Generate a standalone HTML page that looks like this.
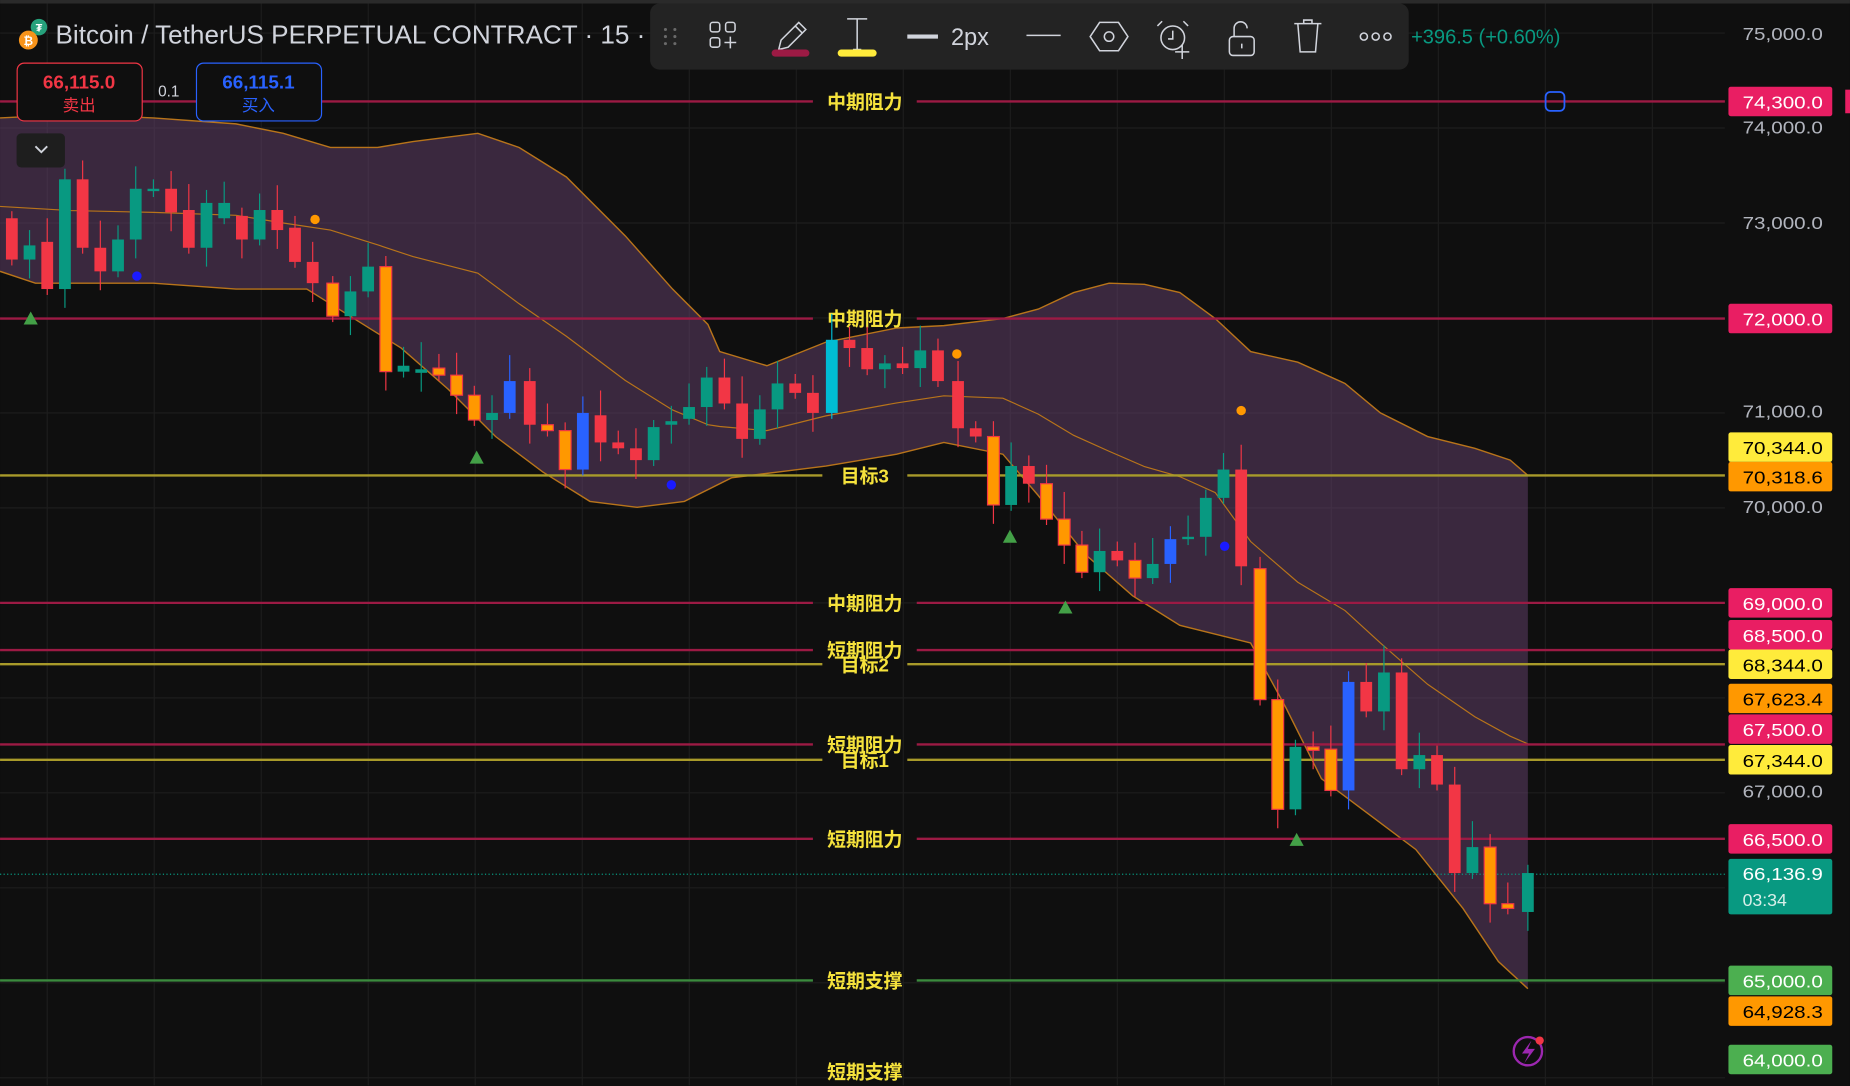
<!DOCTYPE html>
<html><head><meta charset="utf-8"><style>
html,body{margin:0;padding:0;background:#0f0f0f;overflow:hidden}
svg{display:block}
text{font-family:"Liberation Sans","Noto Sans CJK SC",sans-serif}
</style></head><body>
<svg id="c" width="1850" height="1086" viewBox="0 0 1568 920.5" xmlns="http://www.w3.org/2000/svg">
<rect width="1568" height="920.5" fill="#0f0f0f"/>
<rect width="1568" height="3" fill="#2a2a2a"/>
<g id="grid" stroke="#1d1d1d" stroke-width="1"></g>
<g id="band"></g>
<g id="lines"></g>
<g id="candles"></g>
<g id="marks"></g>
<!-- title -->
<circle cx="33" cy="23" r="7" fill="#26a17b"/>
<text x="33" y="26.5" font-size="9" fill="#fff" text-anchor="middle" font-weight="bold">₮</text>
<circle cx="24" cy="34" r="8" fill="#f7931a"/>
<text x="24" y="38" font-size="10" fill="#fff" text-anchor="middle" font-weight="bold">₿</text>
<text x="47" y="37" font-size="22" fill="#d1d4dc" textLength="500" lengthAdjust="spacingAndGlyphs">Bitcoin / TetherUS PERPETUAL CONTRACT · 15 ·</text>
<!-- sell/buy -->
<rect x="14.5" y="53.5" width="106" height="49" rx="6" fill="#0f0f0f" stroke="#f23645"/>
<text x="67" y="75" font-size="16" fill="#f23645" text-anchor="middle" font-weight="bold">66,115.0</text>
<text x="67" y="94" font-size="14" fill="#f23645" text-anchor="middle">卖出</text>
<text x="143" y="82" font-size="13" fill="#d1d4dc" text-anchor="middle">0.1</text>
<rect x="166.5" y="53.5" width="106" height="49" rx="6" fill="#0f0f0f" stroke="#2962ff"/>
<text x="219" y="75" font-size="16" fill="#2962ff" text-anchor="middle" font-weight="bold">66,115.1</text>
<text x="219" y="94" font-size="14" fill="#2962ff" text-anchor="middle">买入</text>
<rect x="14" y="113" width="41" height="29" rx="4" fill="#1e1e1e"/>
<path d="M30 124l5 5 5-5" stroke="#d1d4dc" stroke-width="1.6" fill="none"/>
<!-- toolbar -->
<rect x="551" y="3" width="643" height="56" rx="8" fill="#232323"/>
<g fill="#6a6a6a"><circle cx="564" cy="25" r="1.3"/><circle cx="572" cy="25" r="1.3"/><circle cx="564" cy="31" r="1.3"/><circle cx="572" cy="31" r="1.3"/><circle cx="564" cy="37" r="1.3"/><circle cx="572" cy="37" r="1.3"/></g>
<g stroke="#d1d4dc" stroke-width="1.3" fill="none">
<rect x="602" y="19" width="8" height="8" rx="2"/><rect x="615" y="19" width="8" height="8" rx="2"/><rect x="602" y="32" width="8" height="8" rx="2"/><path d="M619 31v10M614 36h10"/>
<path d="M660 42l2-8 15-15 6 6-15 15z M674 22l6 6"/>
<path d="M718 16h17M726.5 16v26M723 42h7"/>
<path d="M870 30h29"/>
<path d="M932 19h16l8 12-8 12h-16l-8-12z"/><circle cx="940" cy="31" r="4"/>
<circle cx="994" cy="32" r="10"/><path d="M994 26v7h-4M985 18l-4 4M1003 18l4 4M1002 38v12M996 44h12"/>
<rect x="1042" y="31" width="21" height="16" rx="3"/><path d="M1046 31v-7a5.5 5.5 0 0 1 11 0"/><path d="M1052.5 37v4"/>
<path d="M1097 20h23M1105 20v-3h7v3M1100 20l2 24h13l2-24"/>
<circle cx="1156" cy="31" r="3"/><circle cx="1166" cy="31" r="3"/><circle cx="1176" cy="31" r="3"/>
</g>
<rect x="654" y="42" width="32" height="6" rx="3" fill="#9c1a44"/>
<rect x="710" y="42" width="33" height="6" rx="3" fill="#ffeb3b"/>
<path d="M769 31h26" stroke="#d1d4dc" stroke-width="3.5"/>
<text x="806" y="38" font-size="20" fill="#d1d4dc">2px</text>
<text x="1196" y="37" font-size="17" fill="#089981">+396.5 (+0.60%)</text>
<!-- handle -->
<rect x="1310" y="78" width="16" height="16" rx="4" fill="none" stroke="#2962ff" stroke-width="1.5"/>
<!-- axis -->
<g id="axis" font-size="15" fill="#b2b5be"></g>
<g id="labels" font-size="15"></g>
<circle cx="1295" cy="891" r="12" fill="none" stroke="#9c27b0" stroke-width="2"/>
<path d="M1298 882l-8 11h6l-4 8 9-12h-6z" fill="#9c27b0"/>
<circle cx="1305" cy="882" r="3.5" fill="#f23645"/>
</svg>
<script>
const NS="http://www.w3.org/2000/svg";
function el(p,t,a,txt){const e=document.createElementNS(NS,t);for(const k in a)e.setAttribute(k,a[k]);if(txt!=null)e.textContent=txt;document.getElementById(p).appendChild(e);return e;}
const Y=p=>430.5+(70000-p)*0.0805;
for(let x=40;x<1462;x+=90.7)el('grid','line',{x1:x,y1:3,x2:x,y2:920});
[75000,74000,73000,72000,71000,70000,69000,68000,67000,66000,65000,64000].forEach(p=>el('grid','line',{x1:0,y1:Y(p),x2:1462,y2:Y(p)}));
const up=[[0,100],[60,97],[130,100],[200,105],[240,113],[280,125],[320,125],[350,120],[405,113],[440,125],[480,150],[530,200],[570,245],[600,275],[610,298],[650,310],[700,290],[760,278],[800,276],[850,270],[880,262],[910,248],[940,240],[970,241],[1000,248],[1030,270],[1060,298],[1100,307],[1140,325],[1170,350],[1210,370],[1250,380],[1280,390],[1295,403]];
const lo=[[0,230],[30,240],[60,240],[130,240],[200,245],[260,245],[300,270],[340,295],[380,330],[420,370],[460,400],[500,425],[540,430],[580,425],[620,405],[660,400],[700,395],[760,385],[800,375],[850,385],[880,420],[920,470],[960,505],[1000,530],[1040,540],[1060,545],[1090,600],[1120,660],[1160,690],[1200,720],[1240,770],[1270,815],[1295,838]];
const ps=a=>a.map(p=>p.join(',')).join(' ');
el('band','polygon',{points:ps(up)+' '+ps(lo.slice().reverse()),fill:'rgba(110,70,120,0.45)'});
el('band','polyline',{points:ps(up),fill:'none',stroke:'#b8741a','stroke-width':1.2});
el('band','polyline',{points:ps(lo),fill:'none',stroke:'#b8741a','stroke-width':1.2});
const mid=up.map((p,i)=>{const l=lo[Math.min(i,lo.length-1)];return [p[0],(p[1]+l[1])/2+10];});
el('band','polyline',{points:ps(mid),fill:'none',stroke:'#b8741a','stroke-width':1});
const L=[[86,'#9c1a44','中期阻力'],[270,'#9c1a44','中期阻力'],[403,'#a89a2a','目标3'],[511,'#9c1a44','中期阻力'],[551,'#9c1a44','短期阻力'],[563,'#a89a2a','目标2'],[631,'#9c1a44','短期阻力'],[644,'#a89a2a','目标1'],[711,'#9c1a44','短期阻力'],[831,'#3b8a3e','短期支撑']];
L.forEach(([y,c,t])=>{const w=t.length==3?28:36;el('lines','line',{x1:0,y1:y,x2:733-w-8,y2:y,stroke:c,'stroke-width':2});el('lines','line',{x1:733+w+8,y1:y,x2:1462,y2:y,stroke:c,'stroke-width':2});});
L.forEach(([y,c,t])=>el('lines','text',{x:733,y:y+6,'font-size':16,fill:'#f5e23c','text-anchor':'middle','font-weight':'bold'},t));
el('lines','text',{x:733,y:914,'font-size':16,fill:'#f5e23c','text-anchor':'middle','font-weight':'bold'},'短期支撑');
el('lines','line',{x1:0,y1:741,x2:1462,y2:741,stroke:'#089981','stroke-width':1,'stroke-dasharray':'1 2'});
const R='#f23645',G='#089981',O='#ff9800',B='#2962ff',C='#00bcd4';
const cd=[[10,185,220,R],[25,220,208,G],[40,205,245,R],[55,245,152,G],[70,152,210,R],[85,210,230,R],[100,230,203,G],[115,203,160,G],[130,160,162,G],[145,160,180,R],[160,178,210,R],[175,210,172,G],[190,172,185,G],[205,183,203,R],[220,203,178,G],[235,178,195,R],[250,193,222,R],[265,222,240,R],[282,240,268,O],[297,268,247,G],[312,247,226,G],[327,226,315,O],[342,315,310,G],[357,313,316,G],[372,312,318,O],[387,318,335,O],[402,335,356,O],[417,356,350,G],[432,350,323,B],[449,323,360,R],[464,360,365,O],[479,365,398,O],[494,398,350,B],[509,352,375,R],[524,375,380,R],[539,380,390,R],[554,390,362,G],[569,360,357,G],[584,355,345,G],[599,345,320,G],[614,320,342,R],[629,342,372,R],[644,372,347,G],[659,347,325,G],[674,325,333,R],[689,333,350,R],[705,350,288,C],[720,288,295,R],[735,295,313,R],[750,313,308,G],[765,308,312,R],[780,312,297,G],[795,297,323,R],[812,323,363,R],[827,363,370,R],[842,370,428,O],[857,428,395,G],[872,395,410,R],[887,410,440,O],[902,440,462,O],[917,462,485,O],[932,485,467,G],[947,467,475,R],[962,475,490,O],[977,490,478,G],[992,478,457,B],[1007,457,455,G],[1022,455,422,G],[1037,422,398,G],[1052,398,480,R],[1068,482,593,O],[1083,593,686,O],[1098,686,633,G],[1113,633,636,O],[1128,635,670,O],[1143,670,578,B],[1158,578,603,R],[1173,603,570,G],[1188,570,652,R],[1203,652,640,G],[1218,640,665,R],[1233,665,740,R],[1248,740,718,G],[1263,718,766,O],[1278,766,770,O],[1295,773,740,G]];
cd.forEach(([x,o,c,col],i)=>{const t=Math.min(o,c),b=Math.max(o,c);const h=t-(6+(i*7)%18),l=b+(5+(i*11)%22);
 const wc=col==O?R:col;
 el('candles','line',{x1:x,y1:h,x2:x,y2:l,stroke:wc,'stroke-width':1});
 el('candles','rect',{x:x-5,y:t,width:10,height:Math.max(2,b-t),fill:col,stroke:col==O?R:'none','stroke-width':col==O?1:0});});
[[267,186],[811,300],[1052,348]].forEach(([x,y])=>el('marks','circle',{cx:x,cy:y,r:4,fill:'#ff9800'}));
[[116,234],[569,411],[1038,463]].forEach(([x,y])=>el('marks','circle',{cx:x,cy:y,r:4,fill:'#1a1aff'}));
[[26,270],[404,388],[856,455],[903,515],[1099,712]].forEach(([x,y])=>el('marks','path',{d:`M${x} ${y-6}l6 11h-12z`,fill:'#43a047'}));
const TL={textLength:68,lengthAdjust:'spacingAndGlyphs'};
[[75000,28],[74000,107],[73000,188],[71000,348],[70000,429],[67000,670]].forEach(([p,y])=>el('axis','text',Object.assign({x:1477,y:y+6},TL),p.toLocaleString('en-US')+'.0'));
const lb=[[86,'74,300.0','#e91e63','#fff'],[270,'72,000.0','#e91e63','#fff'],[379,'70,344.0','#ffeb3b','#000'],[404,'70,318.6','#ff9800','#000'],[511,'69,000.0','#e91e63','#fff'],[538,'68,500.0','#e91e63','#fff'],[563,'68,344.0','#ffeb3b','#000'],[592,'67,623.4','#ff9800','#000'],[618,'67,500.0','#e91e63','#fff'],[644,'67,344.0','#ffeb3b','#000'],[711,'66,500.0','#e91e63','#fff'],[831,'65,000.0','#4caf50','#fff'],[857,'64,928.3','#ff9800','#000'],[898,'64,000.0','#4caf50','#fff']];
lb.forEach(([y,t,bg,fg])=>{el('labels','rect',{x:1465,y:y-12.5,width:88,height:25,rx:2,fill:bg});el('labels','text',Object.assign({x:1477,y:y+6,fill:fg},TL),t);});
el('labels','rect',{x:1465,y:728,width:88,height:47,rx:2,fill:'#089981'});
el('labels','text',Object.assign({x:1477,y:746,fill:'#fff'},TL),'66,136.9');
el('labels','text',{x:1477,y:768,fill:'#d8efe9'},'03:34');
el('labels','rect',{x:1564,y:76,width:6,height:20,fill:'#e91e63'});
</script>
</body></html>
